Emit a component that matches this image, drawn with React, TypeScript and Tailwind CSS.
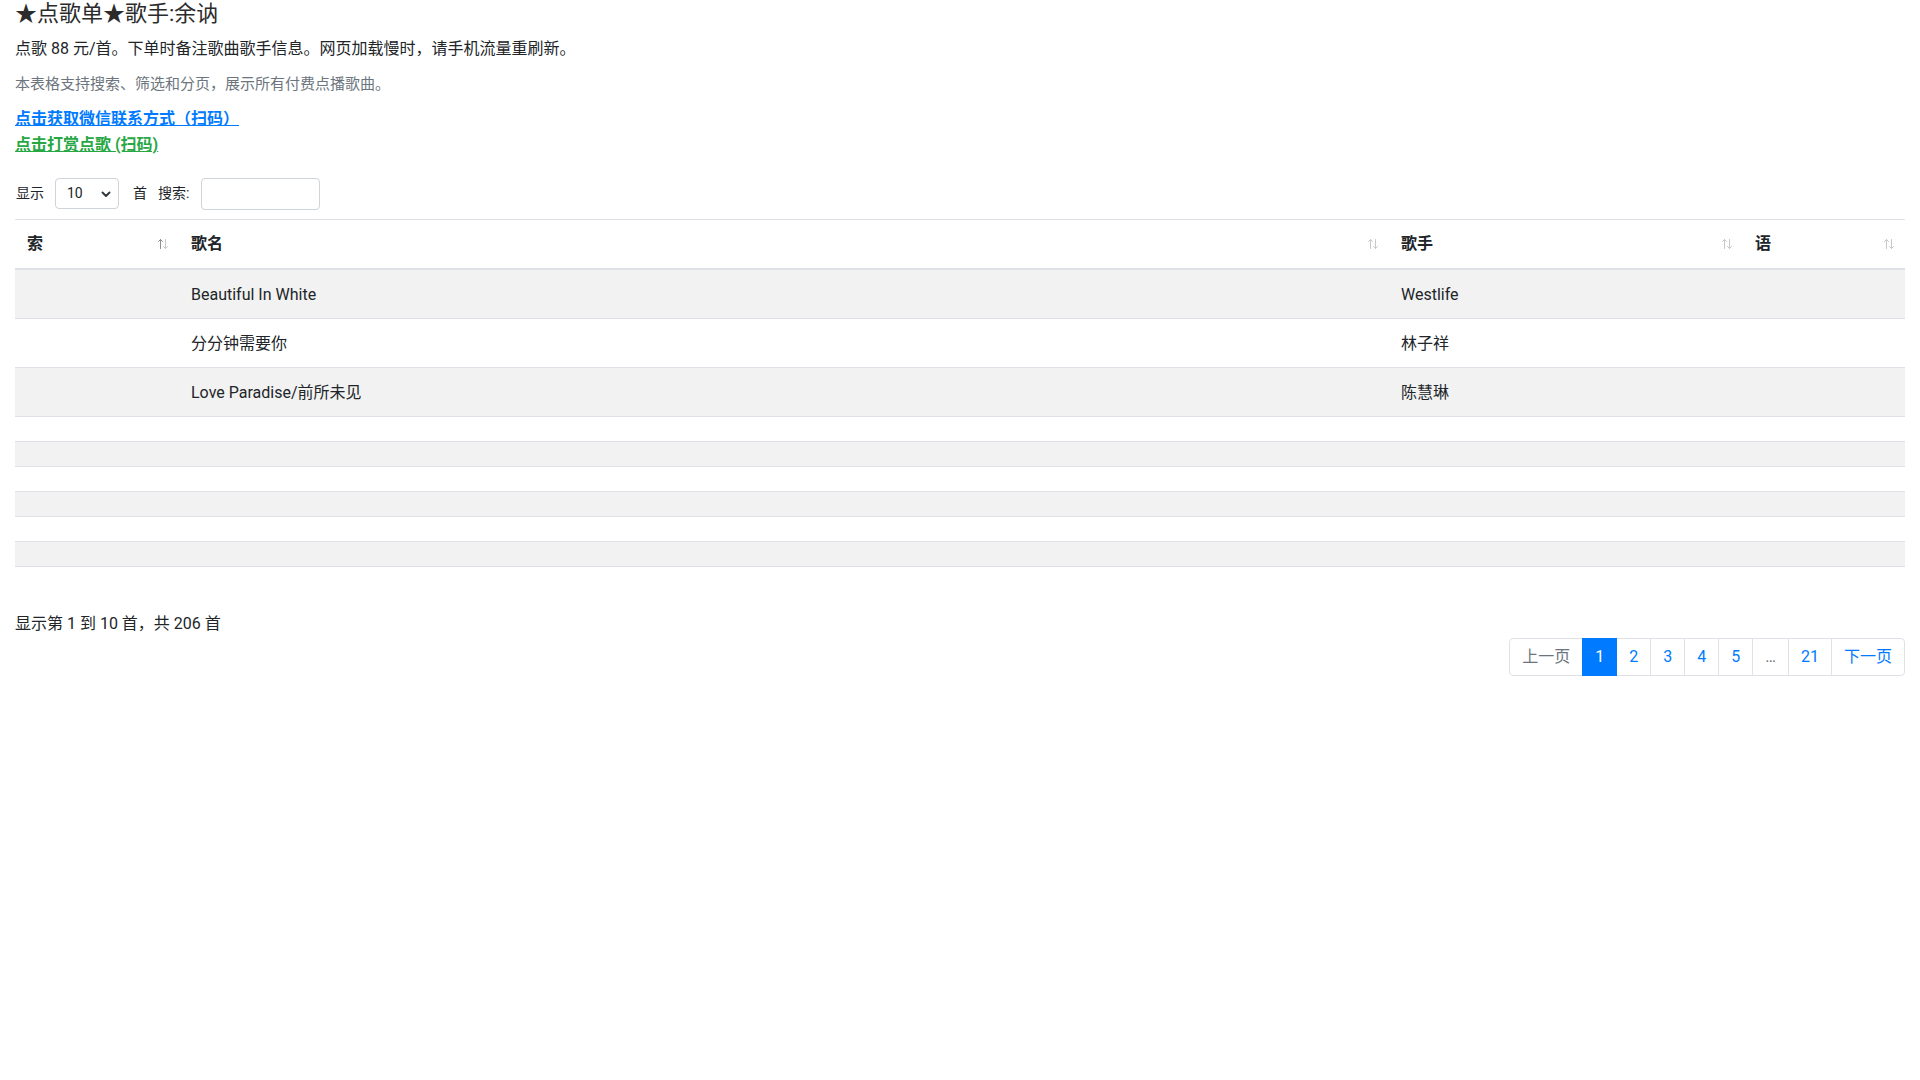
import React from "react";

function SortIcon({ active }: { active?: boolean }) {
  return (
    <svg width="12" height="12" viewBox="0 0 12 12" className="shrink-0">
      <g fill="none" strokeWidth="1" strokeLinecap="round" strokeLinejoin="round">
        <path d="M3.5 10.5V1.5M1.5 3.5L3.5 1.5L5.5 3.5" stroke={active ? "#8f8f8f" : "#c8c8c8"} />
        <path d="M8.5 1.5V10.5M6.5 8.5L8.5 10.5L10.5 8.5" stroke="#c8c8c8" />
      </g>
    </svg>
  );
}

const rows: [string, string, string, string][] = [
  ["", "Beautiful In White", "Westlife", ""],
  ["", "分分钟需要你", "林子祥", ""],
  ["", "Love Paradise/前所未见", "陈慧琳", ""],
];

const cols = "grid grid-cols-[164px_1210px_354px_1fr]";

export default function App() {
  return (
    <div className="min-h-screen bg-white px-[15px] text-[#212529] font-['Roboto','Noto_Sans_CJK_SC',sans-serif]">
      <div className="text-[22px] leading-[27px] text-[#2b2b2b]">★点歌单★歌手:余讷</div>
      <div className="mt-[10px] text-[16px] leading-6">点歌 88 元/首。下单时备注歌曲歌手信息。网页加载慢时，请手机流量重刷新。</div>
      <div className="mt-[11px] text-[15px] leading-6 text-[#6c757d]">本表格支持搜索、筛选和分页，展示所有付费点播歌曲。</div>
      <div className="mt-[11px] text-[16px] leading-6">
        <a className="font-bold text-[#007bff] underline">点击获取微信联系方式（扫码）</a>
      </div>
      <div className="mt-[2px] text-[16px] leading-6">
        <a className="font-bold text-[#28a745] underline">点击打赏点歌 (扫码)</a>
      </div>

      <div className="mt-[21px] flex h-[31px] items-center text-[14px]">
        <span className="ml-px">显示</span>
        <div className="ml-[11px] flex h-[31px] w-[64px] items-center justify-between rounded-[4px] border border-[#ced4da] pl-[11px] pr-[7px]">
          <span>10</span>
          <svg width="10" height="8" viewBox="0 0 10 8">
            <path d="M1.5 2.5L5 6L8.5 2.5" fill="none" stroke="#343a40" strokeWidth="2" strokeLinecap="round" strokeLinejoin="round" />
          </svg>
        </div>
        <span className="ml-[14px]">首</span>
        <span className="ml-[11px]">搜索:</span>
        <div className="ml-[12px] h-[32px] w-[119px] rounded-[4px] border border-[#ced4da]" />
      </div>

      <div className="mt-[10px] border-t border-[#dee2e6] text-[16px]">
        <div className={`${cols} border-b-2 border-[#dee2e6] font-bold`}>
          {["索", "歌名", "歌手", "语"].map((h, i) => (
            <div key={h} className="flex items-center justify-between py-3 pl-3 pr-[10px] leading-6">
              <span>{h}</span>
              <SortIcon active={i === 0} />
            </div>
          ))}
        </div>
        {rows.map((r, i) => (
          <div key={i} className={`${cols} border-b border-[#dee2e6] ${i % 2 === 0 ? "bg-[#f2f2f2]" : "bg-white"}`}>
            {r.map((c, j) => (
              <div key={j} className="px-3 pb-3 pt-[13px] leading-6 -mb-px">{c}</div>
            ))}
          </div>
        ))}
        {[3, 4, 5, 6, 7, 8].map((i) => (
          <div key={i} className={`h-[25px] border-b border-[#dee2e6] ${i % 2 === 0 ? "bg-[#f2f2f2]" : "bg-white"}`} />
        ))}
      </div>

      <div className="mt-[45px] text-[16px] leading-6">显示第 1 到 10 首，共 206 首</div>

      <div className="mt-[2px] flex justify-end">
        <div className="flex text-[16px] leading-5">
          <span className="rounded-l-[4px] border border-[#dee2e6] px-3 py-2 text-[#6c757d]">上一页</span>
          <span className="relative z-10 -ml-px border border-[#007bff] bg-[#007bff] px-3 py-2 text-white">1</span>
          {["2", "3", "4", "5"].map((p) => (
            <span key={p} className="-ml-px border border-[#dee2e6] px-3 py-2 text-[#007bff]">{p}</span>
          ))}
          <span className="-ml-px border border-[#dee2e6] px-3 py-2 text-[#6c757d]">…</span>
          <span className="-ml-px border border-[#dee2e6] px-3 py-2 text-[#007bff]">21</span>
          <span className="-ml-px rounded-r-[4px] border border-[#dee2e6] px-3 py-2 text-[#007bff]">下一页</span>
        </div>
      </div>
    </div>
  );
}
